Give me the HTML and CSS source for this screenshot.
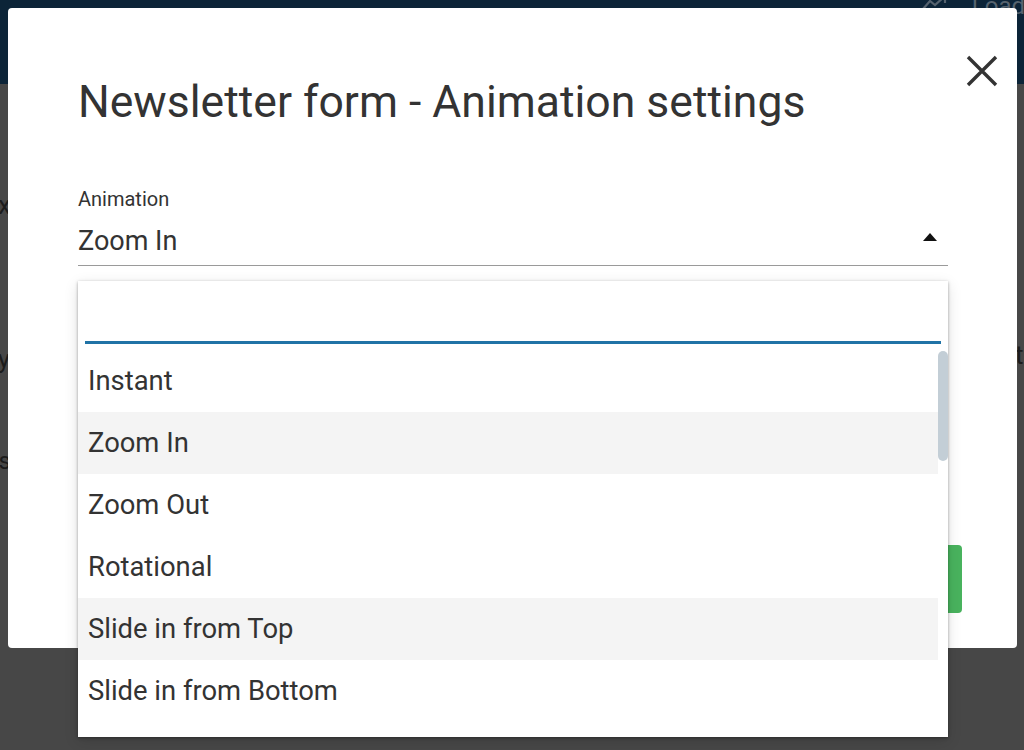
FILE: index.html
```html
<!DOCTYPE html>
<html lang="en">
<head>
<meta charset="utf-8">
<title>Newsletter form - Animation settings</title>
<link rel="stylesheet" href="styles.css">
</head>
<body>
<div class="page">
  <header class="topbar">
    <div class="topbar-tools">
      <svg class="chart-icon" width="26" height="14" viewBox="0 0 26 14"><path d="M1 13 L8 5 L13 9 L22 1" fill="none" stroke="#56636f" stroke-width="2.2"/><path d="M17 1 L23 1 L23 7" fill="none" stroke="#56636f" stroke-width="2.2"/></svg>
      <span class="load">Load</span>
    </div>
  </header>
  <div class="backdrop-content">
    <div class="left-edge">
      <span class="edge-text edge-x">x</span>
      <span class="edge-text edge-y">y</span>
      <span class="edge-text edge-s">s</span>
    </div>
    <div class="right-edge">
      <span class="edge-text edge-t">t</span>
    </div>
  </div>
</div>

<div class="modal">
  <button class="close" aria-label="Close">
    <svg width="32" height="32" viewBox="0 0 32 32"><path d="M2 2 L30 30 M30 2 L2 30" stroke="#333" stroke-width="3.4" fill="none"/></svg>
  </button>
  <h1 class="modal-title">Newsletter form - Animation settings</h1>
  <div class="field">
    <label class="field-label">Animation</label>
    <div class="select">
      <span class="select-value">Zoom In</span>
      <span class="caret"></span>
    </div>
  </div>
  <div class="modal-footer">
    <button class="save-btn">Save</button>
  </div>
</div>

<div class="dropdown">
  <div class="search"><div class="search-line"></div></div>
  <div class="options">
    <ul class="option-list">
      <li class="option">Instant</li>
      <li class="option hl">Zoom In</li>
      <li class="option">Zoom Out</li>
      <li class="option">Rotational</li>
      <li class="option hl">Slide in from Top</li>
      <li class="option">Slide in from Bottom</li>
    </ul>
    <div class="scrollbar"><div class="thumb"></div></div>
  </div>
</div>
</body>
</html>
```
FILE: styles.css
```css
* { box-sizing: border-box; }
html, body { margin: 0; padding: 0; }
body {
  width: 1024px;
  height: 750px;
  overflow: hidden;
  position: relative;
  background: #474747;
  font-family: Roboto, "Noto Sans", sans-serif;
  color: #333;
}
.page { height: 750px; display: flex; flex-direction: column; }
.topbar {
  height: 84px;
  background: #0c2438;
  display: flex;
  justify-content: flex-end;
  align-items: flex-start;
}
.topbar-tools {
  display: flex;
  align-items: flex-start;
  gap: 24px;
  margin-top: -4px;
  margin-right: -1px;
}
.chart-icon { margin-top: 0; }
.load { font-size: 24px; color: #56636f; line-height: 20px; }
.backdrop-content { flex: 1; display: flex; justify-content: space-between; }
.left-edge { width: 9px; display: flex; flex-direction: column; align-items: flex-end; }
.right-edge { width: 9px; display: flex; flex-direction: column; }
.edge-text { font-size: 26px; color: #1c1c1c; line-height: 30px; }
.edge-x { margin-top: 106px; margin-right: -2px; }
.edge-y { margin-top: 124px; margin-right: -1px; }
.edge-s { margin-top: 72px; margin-right: -2px; font-size: 24px; }
.edge-t { margin-top: 256px; }

.modal {
  position: absolute;
  left: 8px;
  top: 8px;
  width: 1009px;
  height: 640px;
  background: #fff;
  border-radius: 4px;
  padding: 0 55px 0 70px;
  display: flex;
  flex-direction: column;
}
.close {
  position: absolute;
  right: 19px;
  top: 47px;
  width: 32px;
  height: 32px;
  padding: 0;
  border: 0;
  background: none;
}
.close svg { display: block; }
.modal-title {
  margin: 68px 0 0 0;
  font-size: 44.5px;
  font-weight: 400;
  line-height: 52px;
  color: #333;
  white-space: nowrap;
}
.field { margin-top: 59px; width: 870px; }
.field-label { display: block; font-size: 20px; line-height: 24px; color: #333; }
.select {
  margin-top: 14px;
  height: 41px;
  border-bottom: 1.5px solid #9a9a9a;
  display: flex;
  justify-content: space-between;
  align-items: flex-start;
  padding-right: 11px;
}
.select-value { font-size: 27px; line-height: 32px; color: #333; }
.caret {
  margin-top: 8px;
  width: 0; height: 0;
  border-left: 7px solid transparent;
  border-right: 7px solid transparent;
  border-bottom: 8px solid #111;
}
.modal-footer {
  margin-top: auto;
  margin-bottom: 35px;
  display: flex;
  justify-content: flex-end;
}
.save-btn {
  width: 120px;
  height: 68px;
  background: #49b35e;
  border: 0;
  border-radius: 4px;
  color: #fff;
  font-size: 20px;
}

.dropdown {
  position: absolute;
  left: 78px;
  top: 281px;
  width: 870px;
  height: 456px;
  background: #fff;
  box-shadow: 0 1px 3px rgba(0,0,0,0.35), 0 4px 14px rgba(0,0,0,0.12);
  display: flex;
  flex-direction: column;
  overflow: hidden;
}
.search { height: 63px; padding: 0 7px; display: flex; align-items: flex-end; }
.search-line { height: 3px; width: 100%; background: #2073a6; }
.options { flex: 1; display: flex; padding-top: 6px; }
.option-list { list-style: none; margin: 0; padding: 0; flex: 1; }
.option {
  height: 62px;
  line-height: 62px;
  padding-left: 10px;
  font-size: 27.4px;
  color: #333;
}
.option.hl { background: #f4f4f4; }
.scrollbar { width: 10px; }
.thumb { margin-top: 1px; height: 110px; width: 10px; background: #c3ced6; border-radius: 5px; }
```
